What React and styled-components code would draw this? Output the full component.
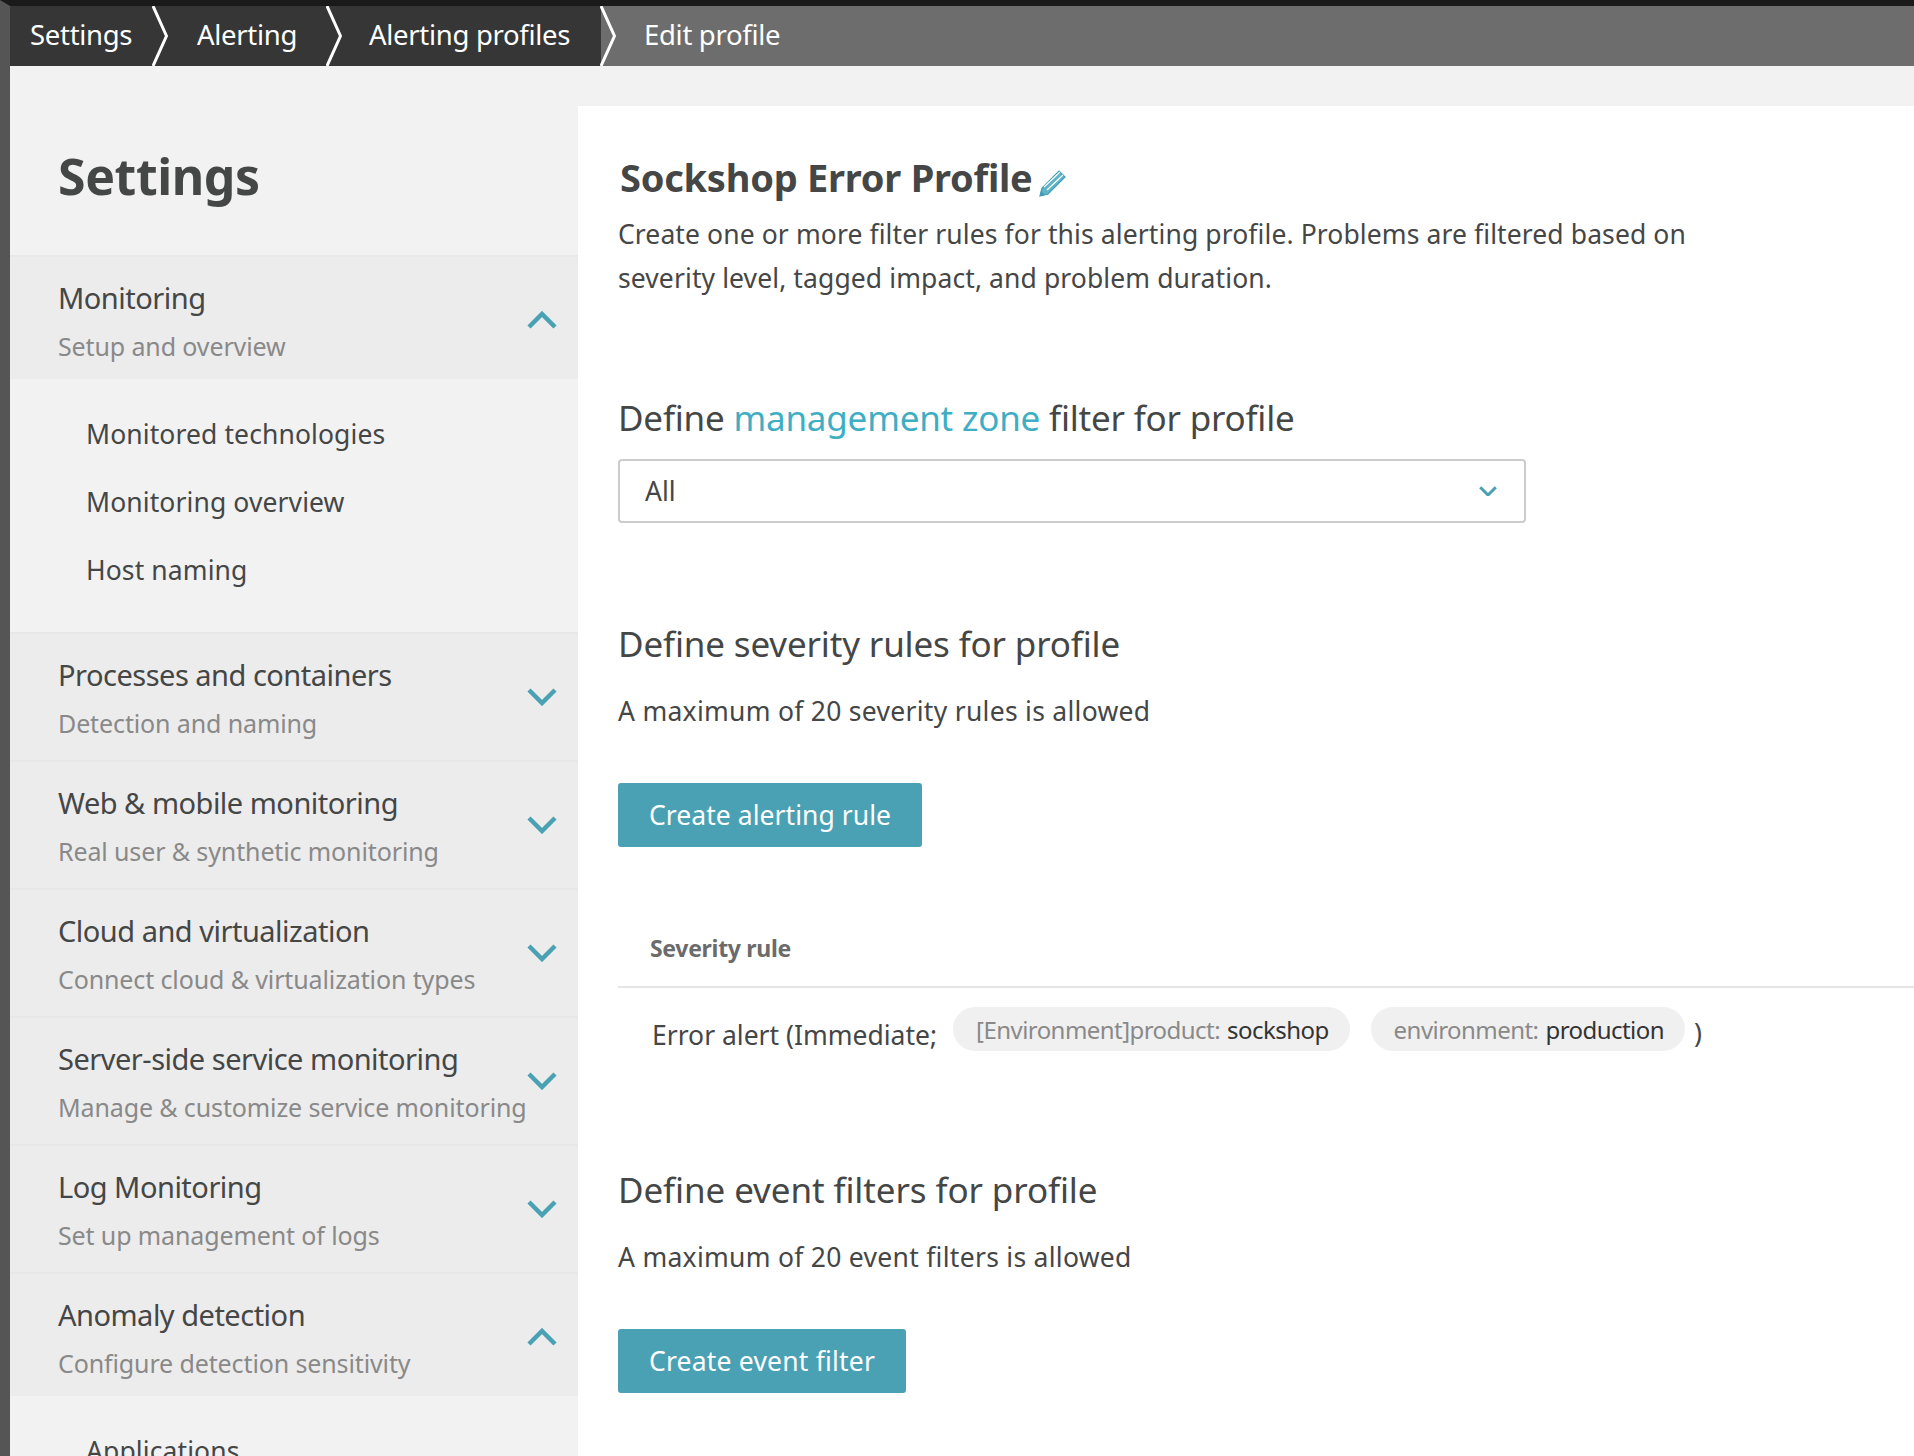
import styled, { createGlobalStyle } from "styled-components";

const GlobalStyle = createGlobalStyle`
  html, body {
    margin: 0;
    padding: 0;
    overflow: hidden;
    background: #f2f2f2;
  }
  * {
    box-sizing: border-box;
  }
`;

const Page = styled.div`
  width: 1914px;
  height: 1456px;
  overflow: hidden;
  background: #f2f2f2;
  font-family: "Noto Sans", "Open Sans", sans-serif;
  color: #454646;
  border-top: 6px solid #1a1a1a;
  border-left: 10px solid #555555;
`;

const Breadcrumbs = styled.nav`
  display: flex;
  height: 60px;
  background: #6d6d6d;
`;

const Crumb = styled.div`
  position: relative;
  display: flex;
  align-items: center;
  width: ${(p) => p.$width}px;
  padding: 0 0 3px ${(p) => p.$pad}px;
  font-size: 27.5px;
  letter-spacing: -0.3px;
  color: #fff;
  white-space: nowrap;
  background: ${(p) => (p.$current ? "#6d6d6d" : "#363636")};
  > svg {
    position: absolute;
    top: 0;
    right: -15px;
    z-index: 1;
  }
`;

const Layout = styled.div`
  display: flex;
  margin-top: 40px;
`;

const Sidebar = styled.aside`
  width: 568px;
  flex-shrink: 0;
`;

const SidebarTitle = styled.h1`
  margin: 0;
  height: 149px;
  padding: 38px 0 0 48px;
  font-size: 50px;
  line-height: 64px;
  font-weight: 700;
  letter-spacing: -0.4px;
`;

const Section = styled.div`
  display: flex;
  align-items: center;
  justify-content: space-between;
  height: ${(p) => (p.$open ? 124 : 128)}px;
  padding: ${(p) => (p.$open ? "4px 21px 0 48px" : "0 21px 0 48px")};
  background: #ececec;
  border-top: 2px solid #e8e8e8;
`;

const SectionTitle = styled.div`
  font-size: 29px;
  line-height: 40px;
  letter-spacing: -0.5px;
  white-space: nowrap;
`;

const SectionHint = styled.div`
  margin-top: 11px;
  font-size: 25px;
  line-height: 34px;
  letter-spacing: -0.12px;
  color: #898989;
  white-space: nowrap;
`;

const SubList = styled.div`
  display: flex;
  flex-direction: column;
  padding: 21px 0 28px 76px;
`;

const SubItem = styled.div`
  height: 68px;
  display: flex;
  align-items: center;
  font-size: 26.5px;
  letter-spacing: 0.1px;
`;

const Content = styled.main`
  flex: 1;
  min-width: 0;
  height: 1400px;
  padding: 45px 0 0 40px;
  background: #fff;
`;

const ProfileTitle = styled.h2`
  display: flex;
  align-items: flex-end;
  gap: 4px;
  margin: 0 0 0 2px;
  font-size: 38px;
  line-height: 52px;
  font-weight: 700;
  letter-spacing: -0.25px;
`;

const Intro = styled.p`
  width: 1120px;
  margin: 9px 0 0;
  font-size: 26.5px;
  line-height: 44px;
  letter-spacing: 0.1px;
`;

const Heading = styled.h3`
  margin: ${(p) => p.$top}px 0 0;
  font-size: 35px;
  line-height: 48px;
  font-weight: 400;
  letter-spacing: ${(p) => p.$spacing}px;
`;

const Accent = styled.span`
  color: #3eaec4;
`;

const Select = styled.div`
  display: flex;
  align-items: center;
  justify-content: space-between;
  width: 908px;
  height: 64px;
  margin-top: 17px;
  padding: 0 27px 0 25px;
  border: 2px solid #cccccc;
  border-radius: 4px;
  font-size: 26.5px;
`;

const Note = styled.p`
  margin: 24px 0 0;
  font-size: 26.5px;
  line-height: 38px;
  letter-spacing: 0.28px;
`;

const Button = styled.button`
  display: block;
  height: 64px;
  margin-top: 53px;
  padding: 0 31px;
  border: 0;
  border-radius: 3px;
  background: #4aa1b4;
  color: #fff;
  font-family: inherit;
  font-size: 26.5px;
  letter-spacing: ${(p) => p.$spacing}px;
`;

const TableHead = styled.div`
  height: 141px;
  padding: 85px 0 0 32px;
  border-bottom: 2px solid #e6e6e6;
  font-size: 23px;
  line-height: 32px;
  font-weight: 700;
  letter-spacing: -0.3px;
  color: #6b6b6b;
`;

const TableRow = styled.div`
  display: flex;
  align-items: center;
  height: 62px;
  margin-top: 16px;
  padding-left: 34px;
  font-size: 26.5px;
  letter-spacing: 0;
`;

const Chip = styled.span`
  display: flex;
  align-items: center;
  height: 44px;
  margin: -12px 0 0 ${(p) => p.$left}px;
  padding: 0 21px 0 23px;
  border-radius: 22px;
  background: #f0f0f0;
  font-size: 24px;
  letter-spacing: -0.55px;
  color: #898989;
  > b {
    margin-left: 7px;
    font-weight: 400;
    color: #333333;
  }
`;

const RowClose = styled.span`
  margin: -4px 0 0 9px;
`;

const ChevronSvg = styled.svg`
  flex-shrink: 0;
  fill: none;
  stroke: #4aa1b4;
`;

const PencilSvg = styled.svg`
  margin: 0 0 6px 2px;
`;

function Chevron({ up, size = 30, weight = 4.5 }) {
  return (
    <ChevronSvg width={size} height={size * 0.6} viewBox="0 0 30 18" strokeWidth={weight * (30 / size)}>
      <path d={up ? "M2 16L15 3L28 16" : "M2 2L15 15L28 2"} />
    </ChevronSvg>
  );
}

function Pencil() {
  return (
    <PencilSvg width="27" height="28" viewBox="0 0 27 28">
      <path d="M1 27L3 19L20 2L26 8L9 25Z" fill="#5fb4c8" stroke="#3f9db2" strokeWidth="1.2" />
      <path d="M5 18L21 3M8 21L24 6" stroke="#fff" strokeWidth="1.2" fill="none" />
      <path d="M1 27L2 22L6 26Z" fill="#3f9db2" />
    </PencilSvg>
  );
}

function CrumbArrow() {
  return (
    <svg width="16" height="60" viewBox="0 0 16 60">
      <path d="M1 0L14.5 30L1 60" fill="none" stroke="#fff" strokeWidth="3" />
    </svg>
  );
}

const crumbs = [
  { label: "Settings", width: 143, pad: 20 },
  { label: "Alerting", width: 174, pad: 44 },
  { label: "Alerting profiles", width: 274, pad: 42 },
];

const sections = [
  { title: "Processes and containers", hint: "Detection and naming" },
  { title: "Web & mobile monitoring", hint: "Real user & synthetic monitoring" },
  { title: "Cloud and virtualization", hint: "Connect cloud & virtualization types" },
  { title: "Server-side service monitoring", hint: "Manage & customize service monitoring" },
  { title: "Log Monitoring", hint: "Set up management of logs" },
];

function SidebarSection({ title, hint, open }) {
  return (
    <Section $open={open}>
      <div>
        <SectionTitle>{title}</SectionTitle>
        <SectionHint>{hint}</SectionHint>
      </div>
      <Chevron up={open} />
    </Section>
  );
}

export default function App() {
  return (
    <Page>
      <GlobalStyle />
      <Breadcrumbs>
        {crumbs.map((c) => (
          <Crumb key={c.label} $width={c.width} $pad={c.pad}>
            {c.label}
            <CrumbArrow />
          </Crumb>
        ))}
        <Crumb $current $width={400} $pad={43}>
          Edit profile
        </Crumb>
      </Breadcrumbs>
      <Layout>
        <Sidebar>
          <SidebarTitle>Settings</SidebarTitle>
          <SidebarSection open title="Monitoring" hint="Setup and overview" />
          <SubList>
            <SubItem>Monitored technologies</SubItem>
            <SubItem>Monitoring overview</SubItem>
            <SubItem>Host naming</SubItem>
          </SubList>
          {sections.map((s) => (
            <SidebarSection key={s.title} title={s.title} hint={s.hint} />
          ))}
          <SidebarSection open title="Anomaly detection" hint="Configure detection sensitivity" />
          <SubList>
            <SubItem>Applications</SubItem>
          </SubList>
        </Sidebar>
        <Content>
          <ProfileTitle>
            Sockshop Error Profile
            <Pencil />
          </ProfileTitle>
          <Intro>
            Create one or more filter rules for this alerting profile. Problems are filtered based on severity level,
            tagged impact, and problem duration.
          </Intro>
          <Heading $top={94} $spacing={-0.2}>
            Define <Accent>management zone</Accent> filter for profile
          </Heading>
          <Select>
            All
            <Chevron size={18} weight={3} />
          </Select>
          <Heading $top={97} $spacing={-0.15}>
            Define severity rules for profile
          </Heading>
          <Note>A maximum of 20 severity rules is allowed</Note>
          <Button $spacing={0.05}>Create alerting rule</Button>
          <TableHead>Severity rule</TableHead>
          <TableRow>
            Error alert (Immediate;
            <Chip $left={16}>
              [Environment]product:<b>sockshop</b>
            </Chip>
            <Chip $left={21}>
              environment:<b>production</b>
            </Chip>
            <RowClose>)</RowClose>
          </TableRow>
          <Heading $top={100} $spacing={-0.1}>
            Define event filters for profile
          </Heading>
          <Note>A maximum of 20 event filters is allowed</Note>
          <Button $spacing={0.2}>Create event filter</Button>
        </Content>
      </Layout>
    </Page>
  );
}
